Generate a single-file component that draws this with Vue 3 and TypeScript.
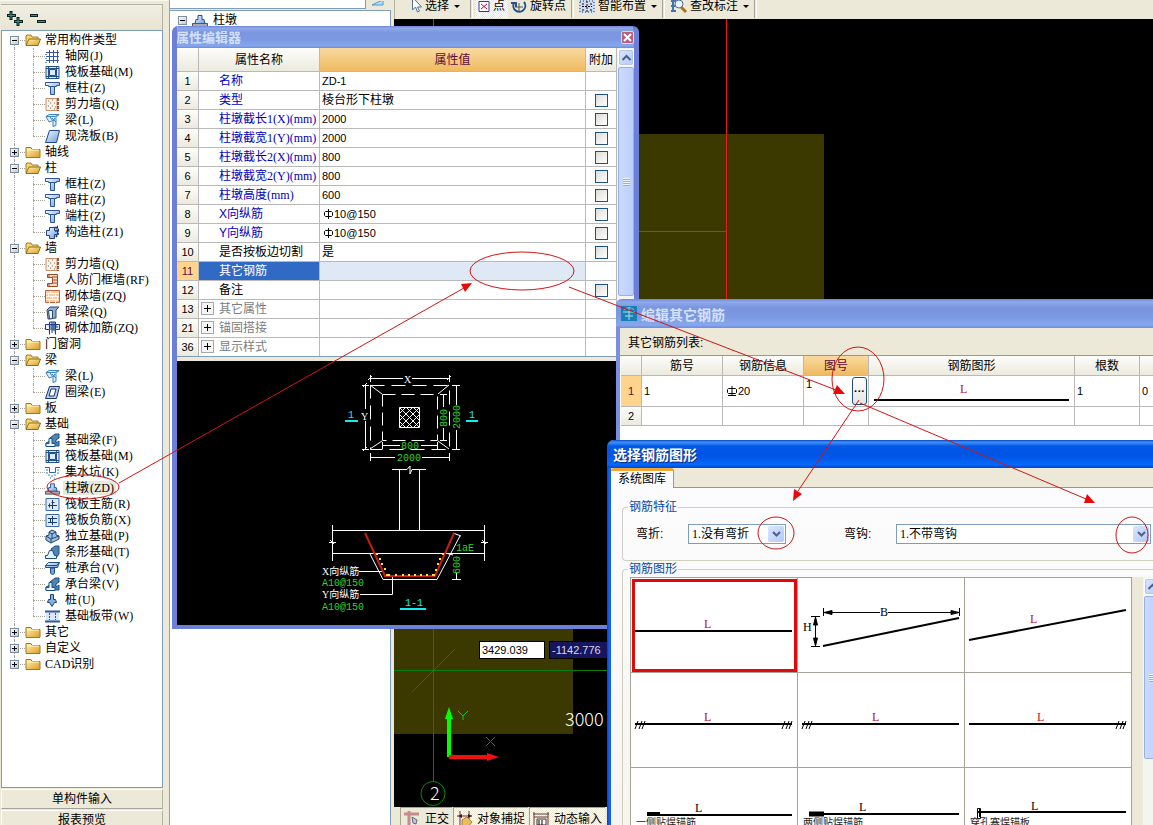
<script setup lang="ts">
import { ref } from 'vue'

interface Leaf { icon: string; name: string; code: string; active?: boolean }
interface Group { name: string; open: boolean; latin?: string; items: Leaf[] }
interface Prop { no: number; name: string; unit?: string; value?: string; zh?: string; rebar?: string; kind: 'key' | 'plain' | 'group' | 'current'; check: boolean }

const leaf = (icon: string, name: string, code: string, active = false): Leaf => ({ icon, name, code, active })

const groups = ref<Group[]>([
  { name: '常用构件类型', open: true, items: [leaf('grid', '轴网', '(J)'), leaf('raft', '筏板基础', '(M)'), leaf('column', '框柱', '(Z)'), leaf('shear', '剪力墙', '(Q)'), leaf('beam', '梁', '(L)'), leaf('slab', '现浇板', '(B)')] },
  { name: '轴线', open: false, items: [] },
  { name: '柱', open: true, items: [leaf('column', '框柱', '(Z)'), leaf('column', '暗柱', '(Z)'), leaf('column', '端柱', '(Z)'), leaf('tie', '构造柱', '(Z1)')] },
  { name: '墙', open: true, items: [leaf('shear', '剪力墙', '(Q)'), leaf('frame', '人防门框墙', '(RF)'), leaf('brick', '砌体墙', '(ZQ)'), leaf('hidden', '暗梁', '(Q)'), leaf('mesh', '砌体加筋', '(ZQ)')] },
  { name: '门窗洞', open: false, items: [] },
  { name: '梁', open: true, items: [leaf('beam', '梁', '(L)'), leaf('ring', '圈梁', '(E)')] },
  { name: '板', open: false, items: [] },
  { name: '基础', open: true, items: [leaf('fbeam', '基础梁', '(F)'), leaf('raft', '筏板基础', '(M)'), leaf('pit', '集水坑', '(K)'), leaf('pier', '柱墩', '(ZD)', true), leaf('mainbar', '筏板主筋', '(R)'), leaf('negbar', '筏板负筋', '(X)'), leaf('indep', '独立基础', '(P)'), leaf('strip', '条形基础', '(T)'), leaf('cap', '桩承台', '(V)'), leaf('fbeam', '承台梁', '(V)'), leaf('pile', '桩', '(U)'), leaf('band', '基础板带', '(W)')] },
  { name: '其它', open: false, items: [] },
  { name: '自定义', open: false, items: [] },
  { name: '识别', latin: 'CAD', open: false, items: [] },
])

const props: Prop[] = [
  { no: 1, name: '名称', value: 'ZD-1', kind: 'key', check: false },
  { no: 2, name: '类型', zh: '棱台形下柱墩', kind: 'key', check: true },
  { no: 3, name: '柱墩截长', unit: '1(X)(mm)', value: '2000', kind: 'key', check: true },
  { no: 4, name: '柱墩截宽', unit: '1(Y)(mm)', value: '2000', kind: 'key', check: true },
  { no: 5, name: '柱墩截长', unit: '2(X)(mm)', value: '800', kind: 'key', check: true },
  { no: 6, name: '柱墩截宽', unit: '2(Y)(mm)', value: '800', kind: 'key', check: true },
  { no: 7, name: '柱墩高度', unit: '(mm)', value: '600', kind: 'key', check: true },
  { no: 8, name: 'X向纵筋', rebar: '10@150', kind: 'key', check: true },
  { no: 9, name: 'Y向纵筋', rebar: '10@150', kind: 'key', check: true },
  { no: 10, name: '是否按板边切割', zh: '是', kind: 'plain', check: true },
  { no: 11, name: '其它钢筋', kind: 'current', check: false },
  { no: 12, name: '备注', kind: 'plain', check: true },
  { no: 13, name: '其它属性', kind: 'group', check: false },
  { no: 21, name: '锚固搭接', kind: 'group', check: false },
  { no: 36, name: '显示样式', kind: 'group', check: false },
]

const xCoord = ref('3429.039')
const yCoord = ref('-1142.776')
const shape = ref(0)
const bottomDots = [388, 395, 402, 408, 414, 420, 426, 432]
const sideDots = [[376, 553], [379, 558], [381, 563], [384, 568], [386, 574], [442, 553], [439, 558], [437, 563], [435, 569], [433, 574]]
</script>

<template>
  <div class="desktop">
    <svg class="defs" aria-hidden="true">
      <defs>
        <linearGradient id="gBlue" x1="0" y1="0" x2="1" y2="1"><stop offset="0" stop-color="#f4f9ff" /><stop offset="1" stop-color="#6f9ddd" /></linearGradient>
        <linearGradient id="gFold" x1="0" y1="0" x2="1" y2="1"><stop offset="0" stop-color="#fff3b8" /><stop offset="1" stop-color="#dd9c20" /></linearGradient>
        <pattern id="hatch" width="7" height="7" patternUnits="userSpaceOnUse" x="399" y="407"><path d="M0 0L7 7M7 0L0 7" stroke="#fff" fill="none" /></pattern>
      </defs>
      <symbol id="open" viewBox="0 0 16 14"><path d="M1 12V3l1-1h4l1 2h6v3" fill="#f4d570" stroke="#a58030" /><path d="M1 12.500L4 6h11.500L13 12.500Z" fill="url(#gFold)" stroke="#8f6b18" /></symbol>
      <symbol id="closed" viewBox="0 0 16 14"><path d="M1 12.500V2.500h5l1 2h8v8Z" fill="url(#gFold)" stroke="#a07820" /><path d="M2 5h12" stroke="#fff5c0" /></symbol>
      <symbol id="grid" viewBox="0 0 15 15"><path d="M4.500 1v13M8.500 1v13M12.500 1v13M1 3.500h13M1 7.500h13M1 11.500h13" stroke="#3a56a8" fill="none" /><path d="M0 5.500h2M0 9.500h2M0 13.500h2" stroke="#7a90c8" /></symbol>
      <symbol id="raft" viewBox="0 0 15 15"><path d="M1 1.500h13v12H1Z" fill="#dcebfa" stroke="#24508c" /><path d="M4.500 4.500h6v6h-6ZM3.500 1v13M11.500 1v13M1 3.500h13M1 11.500h13" fill="none" stroke="#24508c" /></symbol>
      <symbol id="column" viewBox="0 0 15 15"><path d="M.5 1.500h14v3h-3v1h-8v-1h-3ZM5.500 5.500h4v8h-4Z" fill="url(#gBlue)" stroke="#2c559b" /></symbol>
      <symbol id="shear" viewBox="0 0 15 15"><path d="M1 1.500h11v12H1Z" fill="#f8f1eb" stroke="#c98f6c" /><path d="M13 1v13" stroke="#a8582c" stroke-dasharray="3 1" stroke-width="2" /><path d="M3 4h1M7 3h1M5 6h1M9 6h1M3 9h1M7 9h1M10 10h1M5 11h1M9 12h1" stroke="#775" /></symbol>
      <symbol id="beam" viewBox="0 0 15 15"><path d="M1 3.500L4 1.500h10l-3 3v8l-3 1V8l2-3-3 3-3 1Z" fill="#d3ecff" stroke="#3d86c0" /><path d="M1 3.500h9l4-2M7 5l4 4M5 4l3 4" stroke="#3d86c0" fill="none" /></symbol>
      <symbol id="slab" viewBox="0 0 15 15"><path d="M4.500 1.500h10l-3 12H.5Z" fill="url(#gBlue)" stroke="#204a90" /></symbol>
      <symbol id="tie" viewBox="0 0 15 15"><path d="M4.500 2.500h5v3h3v4h-3v4h-5v-3h-3v-5h3Z" fill="url(#gBlue)" stroke="#223f80" /><path d="M9 3l3-1v3M10 6l3-1v5l-3 2" stroke="#223f80" fill="none" stroke-width="2" stroke-dasharray="2 1" /></symbol>
      <symbol id="frame" viewBox="0 0 15 15"><path d="M2.500 1.500h10v12h-10v-3h5v-6h-5Z" fill="#f6dccb" stroke="#a34a20" /><path d="M7 4h5M7 7h5M7 10h5M4 1v3M4 11v2" stroke="#a34a20" /></symbol>
      <symbol id="brick" viewBox="0 0 15 15"><path d="M.5 1.500h14v12H.5Z" fill="#f8c9a5" stroke="#bc653a" /><path d="M1 4.500h13M1 7.500h13M1 10.500h13M5.500 2v3M10.500 5v3M3.500 5v3M7.500 8v3M12.500 8v3M4.500 11v3M10.500 11v3" stroke="#fff8ef" /></symbol>
      <symbol id="hidden" viewBox="0 0 15 15"><path d="M2 5l3-3h9l-3 3v8l-8 1Z" fill="#91aed3" stroke="#31476d" /><path d="M3.500 5.500h4v8l-3 .5Z" fill="#eef5ff" stroke="#31476d" /></symbol>
      <symbol id="mesh" viewBox="0 0 15 15"><path d="M.5 3.500h14v5h-4v5M.5 3.500v5h4v5M4.500 1v7h6V1Z" fill="#d9e8ff" stroke="#1d3d8e" /><path d="M4 4h8M4 6h9M7 1v11M9 1v9" stroke="#1d3d8e" /></symbol>
      <symbol id="ring" viewBox="0 0 15 15"><path d="M4.500 1.500h10l-3 12H.5Z" fill="#b9cdec" stroke="#18346e" /><path d="M6 4h5l-2 7H4Z" fill="#fff" stroke="#18346e" /></symbol>
      <symbol id="fbeam" viewBox="0 0 15 15"><path d="M5 5l5-4h4v4l-3 2v3l3-2v5H1v-3l4-2Z" fill="#4f83b9" stroke="#1d4f83" /><path d="M1 13.500v-3h3v-5h3v5h3v3Z" fill="#e5f2ff" stroke="#1d4f83" /></symbol>
      <symbol id="pit" viewBox="0 0 15 15"><path d="M0 2.500h4.500v5h6v-5H15" fill="none" stroke="#2b65ac" /><path d="M1 5h2M1 8h2M3 10h2M6 11h2M9 10h2M12 8h2M12 5h2M5 13h1M9 13h1" stroke="#3380cb" /></symbol>
      <symbol id="pier" viewBox="0 0 16 15"><path d="M6 2.500h4v4h2l1 4H3l1-4h2Z" fill="url(#gBlue)" stroke="#1d4fa5" /><path d="M.5 10.500h15v3H.5Z" fill="#aaa" stroke="#555" /></symbol>
      <symbol id="mainbar" viewBox="0 0 15 15"><path d="M1 1.500h13v12H1Z" fill="#dcebff" stroke="#3f69ab" /><path d="M7.500 3v9M3 8.500h9M9.500 5.500h-3M4.500 6.500v4" stroke="#183a78" fill="none" /></symbol>
      <symbol id="negbar" viewBox="0 0 15 15"><path d="M1 1.500h13v12H1Z" fill="#dcebff" stroke="#3f69ab" /><path d="M7.500 3v9M3 5.500h9M3 9.500h9M5.500 5v5" stroke="#183a78" fill="none" /></symbol>
      <symbol id="indep" viewBox="0 0 15 15"><path d="M1 7l3-1V3l3-2 4 2v3l3 1v3l-8 4-5-3Z" fill="#9fc0e6" stroke="#1b4473" /><path d="M1 7l5 3 8-3M6 10v4M4 3l3 2 4-2M7 5v4" fill="none" stroke="#1b4473" /></symbol>
      <symbol id="strip" viewBox="0 0 15 15"><path d="M6 4l4-3h4v8l-3 4Z" fill="#4f83b9" stroke="#1d4f83" /><path d="M.5 13.500v-3h2l2-5h3l2 5h2v3Z" fill="#e5f2ff" stroke="#1d4f83" /></symbol>
      <symbol id="cap" viewBox="0 0 15 15"><path d="M.5 4.500l3-3h11l-2 5H.5Z" fill="url(#gBlue)" stroke="#1d4f83" /><path d="M1 4.500h11l2-3" fill="none" stroke="#1d4f83" /><path d="M5.500 7h4v5l-2 2-2-2Z" fill="#6fa3da" stroke="#1d4f83" /></symbol>
      <symbol id="pile" viewBox="0 0 15 15"><path d="M5.500 1.500h3v5h2l1 3h-2l-2.500 4-2.500-4h-2l1-3h2Z" fill="#86b0e4" stroke="#1b4473" /></symbol>
      <symbol id="band" viewBox="0 0 15 15"><path d="M1 2h13v11H1Z" fill="#d9e6fb" /><path d="M0 2.500h15M0 12.500h15" stroke="#2d5b9e" stroke-width="2" /><path d="M4.500 4v7M10.500 4v7" stroke="#2d5b9e" stroke-dasharray="2 1" /></symbol>
    </svg>

    <main class="workspace">
      <aside class="left">
        <div class="tree-tools">
          <button class="flat" aria-label="展开">
            <svg width="17" height="16" viewBox="0 0 17 16"><path d="M5 1v9M1 5.500h9M12 7v9M8 11.500h9" stroke="#0b2020" stroke-width="3" /><path d="M5 2v7M2 5.500h7M12 8v7M9 11.500h7" stroke="#2b9a84" /></svg>
          </button>
          <button class="flat" aria-label="折叠">
            <svg width="17" height="16" viewBox="0 0 17 16"><path d="M1 5.500h8M8 11.500h9" stroke="#0b2020" stroke-width="3" /><path d="M2 5.500h6M9 11.500h7" stroke="#2b9a84" /></svg>
          </button>
        </div>
        <div class="tree">
          <template v-for="(g, gi) in groups" :key="gi">
            <div class="row" :class="{ first: gi === 0, last: gi === groups.length - 1 }">
              <span class="rail"><button class="toggle" :aria-label="g.name" @click="g.open = !g.open"><svg width="9" height="9" viewBox="0 0 9 9"><path d="M2 4.500h5" stroke="#000" /><path v-if="!g.open" d="M4.500 2v5" stroke="#000" /></svg></button></span>
              <svg class="folder" width="16" height="14"><use :href="g.open ? '#open' : '#closed'" /></svg>
              <span class="gname"><span class="latin">{{ g.latin }}</span>{{ g.name }}</span>
            </div>
            <template v-if="g.open">
              <div v-for="(it, i) in g.items" :key="i" class="row">
                <span class="rail"></span>
                <span class="branch" :class="{ end: i === g.items.length - 1 }"></span>
                <svg width="15" height="15"><use :href="'#' + it.icon" /></svg>
                <a href="#" class="leaf" :class="{ active: it.active }">{{ it.name }}<span class="latin code">{{ it.code }}</span></a>
              </div>
            </template>
          </template>
        </div>
        <button class="wide">单构件输入</button>
        <button class="wide">报表预览</button>
      </aside>

      <section class="list">
        <div class="search">
          <input type="text" aria-label="搜索" />
          <button class="flat find" aria-label="查找"><svg width="16" height="8" viewBox="0 0 16 8"><path d="M2 4l4-2 7-3v5H8Z" fill="#b9def8" stroke="#4d9ad5" /></svg></button>
        </div>
        <div class="list-box">
          <div class="list-row">
            <button class="toggle" aria-label="收起"><svg width="9" height="9" viewBox="0 0 9 9"><path d="M2 4.500h5" stroke="#000" /></svg></button>
            <svg width="16" height="15"><use href="#pier" /></svg>
            <span>柱墩</span>
          </div>
        </div>
      </section>

      <section class="stage">
        <div class="toolbar">
          <button class="tool pick"><svg width="13" height="14" viewBox="0 0 13 14"><path d="M3.500-3v13l3-3 2 5 2-1-2-4h4Z" fill="#fff" stroke="#536f99" /></svg><span>选择</span><i class="tri"></i></button>
          <i class="sep"></i>
          <button class="tool pressed"><svg width="12" height="13" viewBox="0 0 12 13"><path d="M1 1.500h10v10H1Z" fill="#fff" stroke="#28418a" /><path d="M3 4l6 5M9 4L3 9" stroke="#c04" /></svg><span>点</span></button>
          <button class="tool"><svg width="16" height="14" viewBox="0 0 16 14"><path d="M13 2a6 6 0 1 1-10 1M0 3h5v4" fill="none" stroke="#26518d" stroke-width="2" /><path d="M8 3v8M4 7h8" stroke="#555" /></svg><span>旋转点</span></button>
          <i class="sep"></i>
          <button class="tool"><svg width="16" height="14" viewBox="0 0 16 14"><path d="M0 0h16v13H0Z" fill="#cfdcf0" /><path d="M1 1h14v11H1Z" fill="none" stroke="#223a70" stroke-dasharray="1 2" /><path d="M8 1v11M3 6.500h10M4 3v2M12 3v2M4 9v2M12 9v2" stroke="#111" stroke-dasharray="2 1" /></svg><span>智能布置</span><i class="tri"></i></button>
          <i class="sep"></i>
          <button class="tool"><svg width="17" height="14" viewBox="0 0 17 14"><path d="M3 0v12M1 1h5M1 6h4M1 11h5" stroke="#4173b9" stroke-width="2" /><circle cx="9" cy="4" r="4" fill="#e8f5ff" stroke="#4d6e9b" /><path d="M11 7l5 5" stroke="#a87422" stroke-width="3" /></svg><span>查改标注</span><i class="tri"></i></button>
          <i class="sep"></i>
        </div>
        <div class="canvas">
          <svg width="759" height="788" viewBox="394 19 759 788">
            <path d="M500 134H824V500H500ZM394 600H573V734H394Z" fill="#3c3900" />
            <path d="M726.500 19V500M433.500 19V30M600 231.500H726" stroke="#f01818" fill="none" />
            <path d="M394 670.500H620M433.500 600V781M412 692L455 649" stroke="#0b7d0b" fill="none" />
            <circle cx="433" cy="793.500" r="12" fill="none" stroke="#0b8a0b" />
            <text x="430" y="800" class="cad" fill="#fff">2</text>
            <text x="565" y="726" class="cad" fill="#fff">3000</text>
            <path d="M449 757V716" stroke="#0f0" stroke-width="4" /><path d="M449 707L453 719H445Z" fill="#0f0" />
            <path d="M449 757H487" stroke="#f01010" stroke-width="4" /><path d="M499 757L487 761V753Z" fill="#f01010" />
            <path d="M458 711L463 716L468 711M463 716V720" stroke="#13c813" fill="none" />
            <path d="M486 737L495 746M495 737L486 746" stroke="#f01818" fill="none" />
          </svg>
          <div class="coords"><input v-model="xCoord" aria-label="X 坐标" /><input v-model="yCoord" class="dark" aria-label="Y 坐标" /></div>
        </div>
        <div class="status">
          <button class="tool"><svg width="17" height="15" viewBox="0 0 17 15"><path d="M0 3h15M5 0v14" stroke="#c78c88" stroke-width="3" /><path d="M8 6l5 3-1 4-3-1Z" fill="#b9c7df" stroke="#668" /></svg><span>正交</span></button>
          <button class="tool pressed"><svg width="16" height="15" viewBox="0 0 16 15"><path d="M3 0v14M12 0v12M0 5h15" stroke="#6b3430" /><path d="M1 5l4-2v4ZM15 5l-4-2v4Z" fill="#511" /><path d="M5 9l5-3 5 5-4 5H5Z" fill="#e6bd64" stroke="#a98238" /></svg><span>对象捕捉</span></button>
          <button class="tool pressed"><svg width="17" height="15" viewBox="0 0 17 15"><path d="M1 1v13M15 1v13M0 3h16M1 6h14" stroke="#6b3430" fill="none" /><path d="M4 8h9v6H4Z" fill="#fff" stroke="#333" /><path d="M6 9v5M9 9v5" stroke="#000" /></svg><span>动态输入</span></button>
        </div>
      </section>
    </main>

    <section class="win props">
      <header class="title idle"><h2>属性编辑器</h2><button class="close" aria-label="关闭"><svg width="9" height="9" viewBox="0 0 9 9"><path d="M1 1l7 7M8 1L1 8" stroke="#fff" stroke-width="2" /></svg></button></header>
      <div class="sheet">
        <table class="ptable">
          <thead><tr><th class="c-no"></th><th class="c-name">属性名称</th><th class="hot">属性值</th><th class="c-add">附加</th></tr></thead>
          <tbody>
            <tr v-for="p in props" :key="p.no" :class="p.kind">
              <th class="num">{{ p.no }}</th>
              <td class="pname"><button v-if="p.kind === 'group'" class="plus" :aria-label="p.name"><svg width="13" height="13" viewBox="0 0 13 13"><path d="M3 6.500h7M6.500 3v7" stroke="#000" /></svg></button><span>{{ p.name }}</span><span class="latin">{{ p.unit }}</span></td>
              <td class="pval"><svg v-if="p.rebar" class="phi" width="9" height="12" viewBox="0 0 9 12"><path d="M4.500 1v10M.5 4.500l1-1h6l1 1v3l-1 1h-6l-1-1Z" stroke="#000" fill="none" /></svg><span class="digits">{{ p.value }}{{ p.rebar }}</span>{{ p.zh }}</td>
              <td class="pcheck"><input v-if="p.check" type="checkbox" :aria-label="p.name" /></td>
            </tr>
          </tbody>
        </table>
        <div class="scroll"><button class="sbtn" aria-label="向上"><svg width="11" height="9" viewBox="0 0 11 9"><path d="M1.500 7l4-4 4 4" fill="none" stroke="#4d6185" stroke-width="2" /></svg></button><div class="thumb"><i class="grip"></i></div></div>
      </div>
      <div class="view">
        <svg width="457" height="264" viewBox="177 361 457 264">
          <g stroke="#fff" fill="none">
            <path d="M370 378.500H403M412 378.500H450M370.500 375V382M449.500 375V382M368 380l4-4M447 380l4-4" />
            <path d="M370.500 385.500H449.500V449.500H370.500Z" stroke-dasharray="14 7" />
            <path d="M382.500 394.500H437.500V440.500H382.500Z" stroke-dasharray="13 6" />
            <path d="M370 385L382 394M449 385L438 394M370 449L382 441M449 449L438 441" />
            <path d="M399.500 407.500H419.500V427.500H399.500Z" fill="url(#hatch)" />
            <path d="M365.500 385V409M365.500 421V450M362 385.500H369M362 449.500H369M363 387l4-4M363 451l4-4" />
            <path d="M443.500 394V407M443.500 428V441M440 394.500H447M440 440.500H447M456.500 385V405M456.500 430V450M452 385.500H460M452 449.500H460" />
            <path d="M382 445.500H400M421 445.500H438M382.500 442V449M437.500 442V449M370 457.500H395M422 457.500H450M370.500 453V461M449.500 453V461" />
            <path d="M392 469.500H407L410 466V474L412 469.500H426M399.500 469V531M419.500 469V531" />
            <path d="M332 530.500H485M332 553.500H485M332.500 525V561M484.500 525V561M329 542.500h7M481 542.500h7M330 540l4 4M482 540l4 4" />
            <path d="M370 554L383 579.500H437L460 536M453 533l8 3M445 553l8 2" />
            <path d="M456.500 573V580M452 553.500H461M452 579.500H461M359 571.500H382M360 594.500H392.500V575" />
          </g>
          <path d="M365 533L385 576H435L454 533" stroke="#c91d12" stroke-width="2" fill="none" />
          <g fill="#ffe04a"><rect v-for="x in bottomDots" :key="x" :x="x" y="574" width="2" height="2" /><rect v-for="(d, i) in sideDots" :key="i" :x="d[0]" :y="d[1]" width="2" height="2" /></g>
          <path d="M345 421H358M466 421H478M400 609H426" stroke="#1ee" stroke-width="2" />
          <g class="cyan"><text x="348" y="418">1</text><text x="469" y="418">1</text><text x="405" y="606">1-1</text></g>
          <g class="white"><text x="404" y="383">X</text><text x="361" y="420">Y</text><text x="322" y="575">X向纵筋</text><text x="322" y="598">Y向纵筋</text></g>
          <g class="green"><text x="401" y="449">800</text><text x="397" y="461">2000</text><text x="322" y="586">A10@150</text><text x="322" y="610">A10@150</text><text x="456" y="551">1aE</text><text transform="translate(447 427) rotate(-90)">800</text><text transform="translate(460 429) rotate(-90)">2000</text><text transform="translate(460 574) rotate(-90)">600</text></g>
        </svg>
      </div>
    </section>

    <section class="win rebar">
      <header class="title idle tall"><svg width="16" height="15" viewBox="0 0 16 15"><rect width="16" height="15" fill="#1b7eb4" /><path d="M8 1v13M2 6h12M4 10h8" stroke="#a9dff3" fill="none" /><path d="M3 4c2-3 8-3 10 0" stroke="#6ec0df" fill="none" /></svg><h2>编辑其它钢筋</h2></header>
      <p class="caption">其它钢筋列表:</p>
      <table class="rtable">
        <colgroup><col class="w21" /><col class="w81" /><col class="w81" /><col class="w65" /><col class="w206" /><col class="w65" /><col class="w81" /></colgroup>
        <thead><tr><th></th><th>筋号</th><th>钢筋信息</th><th class="hot">图号</th><th>钢筋图形</th><th>根数</th><th></th></tr></thead>
        <tbody>
          <tr class="r1">
            <th class="cur">1</th><td>1</td>
            <td class="info"><svg class="phi" width="10" height="12" viewBox="0 0 10 12"><path d="M5 1v10M.5 4.500l1-1h7l1 1v3l-1 1h-7l-1-1ZM1 10.500h8" stroke="#000" fill="none" /></svg>20</td>
            <td><div class="pick-cell"><span>1</span><button class="more" aria-label="选择图号">···</button></div></td>
            <td class="draw"><svg width="205" height="30" viewBox="869 376 205 30"><path d="M874 400H1069" stroke="#000" stroke-width="2" /><text x="960" y="393" class="mono red">L</text></svg></td>
            <td>1</td><td>0</td>
          </tr>
          <tr class="r2"><th>2</th><td></td><td></td><td></td><td></td><td></td><td></td></tr>
        </tbody>
      </table>
    </section>

    <section class="win shapes">
      <header class="title live"><h2>选择钢筋图形</h2></header>
      <div class="tabs"><button class="tab">系统图库</button></div>
      <div class="page">
        <fieldset class="feature">
          <legend>钢筋特征</legend>
          <div class="fields">
            <label for="bend">弯折:</label>
            <div class="combo short"><select id="bend"><option>1.没有弯折</option></select><i><svg width="9" height="8" viewBox="0 0 9 8"><path d="M1 2l3.500 3.500L8 2" fill="none" stroke="#4d6185" stroke-width="2" /></svg></i></div>
            <label for="hook">弯钩:</label>
            <div class="combo long"><select id="hook"><option>1.不带弯钩</option></select><i><svg width="9" height="8" viewBox="0 0 9 8"><path d="M1 2l3.500 3.500L8 2" fill="none" stroke="#4d6185" stroke-width="2" /></svg></i></div>
          </div>
        </fieldset>
        <fieldset class="gallery">
          <legend>钢筋图形</legend>
          <div class="gal-body">
            <div class="cells">
              <button v-for="n in 9" :key="n" class="cell" :class="{ chosen: shape === n - 1 }" :aria-label="'图形 ' + n" @click="shape = n - 1">
                <svg width="166" height="94" viewBox="0 0 166 94" stroke="#000" stroke-width="2" fill="none">
                  <template v-if="n === 1"><path d="M4 53H161" /><text x="73" y="50" class="mono red">L</text></template>
                  <template v-else-if="n === 2"><path d="M25 68L161 40" /><path d="M25.500 30v8M161.500 30v8M26 34.500H82M90 34.500H161M17.500 39V68M13 38.500h9M13 68.500h9" stroke-width="1" /><path d="M26 34.500l8-2v4ZM161 34.500l-8-2v4ZM17.500 39l-2 8h4ZM17.500 68l-2-8h4Z" fill="#000" stroke-width="1" /><text x="82" y="38" class="mono">B</text><text x="5" y="53" class="mono">H</text></template>
                  <template v-else-if="n === 3"><path d="M4 62L161 32" /><text x="65" y="45" class="mono red">L</text></template>
                  <template v-else-if="n < 7"><path d="M4 51H161" /><path v-if="n < 6" d="M4 56l3-8M8 56l3-8M11 56l3-8" stroke-width="1" /><path v-if="n !== 5" d="M151 56l3-8M155 56l3-8M158 56l3-8" stroke-width="1" /><text :x="n === 6 ? 72 : n === 5 ? 74 : 73" y="48" class="mono red">L</text></template>
                  <template v-else-if="n === 7"><path d="M16 47H161" /><path d="M16 46H29" stroke-width="4" /><text x="64" y="44" class="mono">L</text><text x="5" y="58" class="tiny">一侧贴焊锚筋</text></template>
                  <template v-else-if="n === 8"><path d="M11 46H161" /><path d="M11 46H26" stroke-width="5" /><text x="61" y="43" class="mono">L</text><text x="5" y="58" class="tiny">两侧贴焊锚筋</text></template>
                  <template v-else><path d="M13 44H161" /><path d="M12.500 40.500h3v10h-3Z" stroke-width="1" /><path d="M15 41v8" /><text x="66" y="42" class="mono">L</text><text x="5" y="58" class="tiny">穿孔塞焊锚板</text></template>
                </svg>
              </button>
            </div>
            <div class="scroll gal-scroll"><button class="sbtn" aria-label="向上"><svg width="11" height="9" viewBox="0 0 11 9"><path d="M1.500 7l4-4 4 4" fill="none" stroke="#4d6185" stroke-width="2" /></svg></button><div class="thumb gthumb"><i class="grip"></i></div></div>
          </div>
        </fieldset>
      </div>
    </section>

    <svg class="notes" width="1153" height="825" viewBox="0 0 1153 825" aria-hidden="true">
      <g fill="none" stroke="#d21414">
        <ellipse cx="83" cy="487" rx="36" ry="12" /><ellipse cx="522" cy="271" rx="52" ry="19" /><ellipse cx="858" cy="379" rx="26" ry="32" /><ellipse cx="776" cy="533" rx="18" ry="16" /><ellipse cx="1132" cy="535" rx="16" ry="18" />
        <path d="M119 483L464 288M569 287L836 390M859 400L798 491M860 403L1086 499" />
      </g>
      <path d="M472 283L465 292L461 284ZM845 394L833 394L837 385ZM793 501L794 489L802 494ZM1095 503L1084 503L1087 494Z" fill="#e80a0a" />
    </svg>
  </div>
</template>

<style>
html, body { margin: 0; overflow: hidden; }
</style>

<style scoped>
.desktop { position: relative; height: 100vh; overflow: hidden; background: #ece9d8; color: #000; font: 12px/14px "Liberation Sans", "Noto Sans CJK SC", sans-serif; }
.desktop * { box-sizing: border-box; }
.defs { position: absolute; width: 0; height: 0; }
svg { display: block; flex: none; }
button, input, select { font: inherit; color: inherit; margin: 0; padding: 0; border-radius: 0; }
button { border: 0; background: none; }
h2, p { margin: 0; }
.latin { font-family: "Liberation Serif", serif; }
.workspace { display: grid; grid-template-columns: 169px 225px 1fr; height: 100%; }

.left { display: flex; flex-direction: column; min-height: 0; padding: 3px 6px 0 1px; border-top: 1px solid #f8f7f0; }
.tree-tools { display: flex; gap: 6px; height: 26px; flex: none; padding: 5px; border-top: 1px solid #b5b19f; border-right: 1px solid #b5b19f; background: linear-gradient(#f1efe3, #e8e4d3); }
.tree { flex: 1; min-height: 0; overflow: hidden; padding-top: 1px; border: 1px solid #7f9db9; background: #fff; }
.row { display: flex; align-items: center; height: 16px; white-space: nowrap; }
.rail { position: relative; display: flex; align-items: center; justify-content: flex-end; width: 23px; height: 16px; padding-right: 6px; flex: none; }
.rail::before { content: ""; position: absolute; left: 12px; top: 0; bottom: 0; border-left: 1px dotted #a5a293; }
.first .rail::before { top: 8px; }
.last .rail::before { bottom: 8px; }
.rail:has(.toggle)::after { content: ""; position: absolute; left: 18px; right: 0; top: 8px; border-top: 1px dotted #a5a293; }
.toggle { position: relative; display: block; width: 9px; height: 9px; border: 1px solid #7b8fa5; background: linear-gradient(135deg, #fff, #cdc9bb); flex: none; }
.toggle svg { margin: -1px; }
.gname { padding-left: 4px; }
.branch { position: relative; width: 20px; height: 16px; flex: none; }
.branch::before { content: ""; position: absolute; left: 8px; top: 0; bottom: 0; border-left: 1px dotted #a5a293; }
.branch.end::before { bottom: 8px; }
.branch::after { content: ""; position: absolute; left: 8px; right: 0; top: 8px; border-top: 1px dotted #a5a293; }
.leaf { margin-left: 3px; padding: 0 2px; color: #000; text-decoration: none; }
.leaf.active { background: #ece9d8; }
.code { margin-left: 1px; }
.wide { height: 20px; flex: none; margin-top: 1px; border: 1px solid; border-color: #fff #b5b19f #a5a293 #fff; background: #ece9d8; text-align: center; }
.left .wide:last-child { margin-bottom: -5px; }

.list { display: flex; flex-direction: column; border-left: 1px solid #8ba2b8; padding-right: 3px; min-width: 0; }
.search { display: flex; height: 9px; flex: none; overflow: hidden; }
.search input { flex: 1; min-width: 0; height: 9px; border: 1px solid #7f9db9; border-top: 0; border-left: 0; background: #fff; }
.find { width: 25px; padding-left: 4px; }
.list-box { flex: 1; border: 1px solid #7f9db9; border-left: 0; border-bottom: 0; background: #fff; margin-top: 1px; }
.list-row { display: flex; align-items: center; gap: 5px; height: 18px; padding-left: 8px; }

.stage { display: flex; flex-direction: column; min-width: 0; }
.toolbar { display: flex; align-items: flex-start; height: 19px; overflow: hidden; flex: none; padding-left: 5px; border-left: 1px solid #b5b19f; background: #ece9d8; }
.tool { display: flex; align-items: flex-start; gap: 3px; height: 18px; padding: 0 3px; line-height: 13px; white-space: nowrap; flex: none; }
.toolbar .pick { padding: 0 8px 0 9px; }
.tool.pressed { background: repeating-conic-gradient(#fff 0 25%, #ece9d8 0 50%) 0 0 / 2px 2px; }
.tri { margin: 5px 0 0 2px; border: 3px solid transparent; border-top-color: #000; border-bottom: 0; }
.sep { width: 3px; height: 18px; margin: 0 2px; border-left: 1px solid #a5a293; border-right: 1px solid #fff; flex: none; }
.canvas { position: relative; flex: 1; min-height: 0; overflow: hidden; background: #000; }
.cad { font: 300 18px "Noto Sans CJK SC", "Liberation Sans", sans-serif; }
.coords { position: absolute; left: 85px; top: 622px; display: flex; gap: 4px; }
.coords input { width: 66px; height: 18px; padding: 0 2px; border: 1px solid #000; background: #fff; font: 11px/14px "Liberation Sans", sans-serif; }
.coords .dark { background: #17155c; color: #d8d8f0; }
.status { display: flex; height: 18px; flex: none; gap: 1px; padding: 0 0 0 6px; overflow: hidden; background: #ece9d8; }
.status .tool { height: 26px; padding: 3px 3px 0; gap: 4px; border-left: 1px solid #a5a293; border-top: 1px solid #a5a293; line-height: 16px; }

.win { position: absolute; display: flex; flex-direction: column; overflow: hidden; }
.title { display: flex; align-items: center; flex: none; }
.title h2 { flex: 1; font: bold 13px/22px "Noto Sans CJK SC", sans-serif; }
.idle { color: #d3e0fa; background: linear-gradient(#6e87dc, #8fa9ea 10%, #7a96df 30%, #7b98e2 60%, #86a8ec 90%, #6e8ade); }
.props { left: 172px; top: 26px; width: 467px; height: 603px; border: solid #6c7fd9; border-width: 0 5px 4px; border-radius: 6px 6px 0 0; }
.props .title { height: 22px; margin: 0 -5px; padding: 0 5px 0 4px; }
.close { display: grid; place-items: center; width: 13px; height: 13px; border: 1px solid #e5d5e8; background: #b3617b; border-radius: 2px; }
.sheet { display: flex; height: 309px; flex: none; background: #fff; border-bottom: 1px solid #7f9db9; overflow: hidden; box-shadow: 0 4px #ece9d8; }
table { border-collapse: separate; border-spacing: 0; table-layout: fixed; }
th, td { padding: 0; border: solid #b9b9b9; border-width: 0 1px 1px 0; font-weight: normal; white-space: nowrap; overflow: hidden; }
th { background: linear-gradient(#fdfdfa, #eceade); }
.hot { background: linear-gradient(#f9d9a0, #efba5f); color: #5d0b3d; }
.ptable { width: 440px; flex: none; }
.ptable thead th { height: 24px; }
.c-no { width: 22px; }
.c-name { width: 121px; }
.c-add { width: 31px; }
.ptable tbody th, .ptable td { height: 19px; line-height: 18px; }
.num, .digits, .rtable tbody { font: 11px/16px "Liberation Sans", sans-serif; }
.pname { position: relative; padding-left: 20px; }
.plus { position: absolute; left: 2px; top: 2px; border: 1px solid #a9a9a9; background: #f5f5f5; width: 13px; height: 13px; }
.plus svg { margin: -1px; }
.key .pname { color: #0000c0; }
.group .pname { color: #7c7c7c; }
.current .num { background: #ffd58d; color: #5d0b3d; }
.current .pname { background: #316ac5; color: #fff; }
.current .pval { background: #dfe8f5; }
.pval { padding-left: 2px; }
.phi { display: inline-block; vertical-align: -2px; margin: 0 1px 0 2px; }
.pcheck input { appearance: none; display: block; width: 13px; height: 13px; margin: 0 auto; border: 1px solid #1d5281; background: linear-gradient(135deg, #dcdcd7, #fff); }
.scroll { width: 17px; display: flex; flex-direction: column; gap: 1px; padding: 1px 0 0 1px; background: #f5f5f0; flex: none; }
.sbtn { display: grid; place-items: center; width: 16px; height: 17px; flex: none; border: 1px solid #fff; border-radius: 3px; background: linear-gradient(135deg, #dbe6ff, #b6cbfa); outline: 1px solid #b5c7ee; outline-offset: -2px; }
.thumb { display: grid; place-items: center; width: 16px; height: 229px; border: 1px solid #98b0e8; border-radius: 2px; background: linear-gradient(90deg, #cbdaff, #bccffc); }
.grip { width: 7px; height: 8px; background: repeating-linear-gradient(#eef4fe 0 1px, #8cb0f8 1px 2px); }
.view { flex: 1; min-height: 0; margin-top: 4px; background: #000; }
.cyan, .white, .green { font: 10px "Liberation Mono", "Noto Sans CJK SC", monospace; }
.white { font-family: "Liberation Serif", "Noto Sans CJK SC", serif; }
.cyan { fill: #1ee; }
.white { fill: #fff; }
.green { fill: #2bd52b; }

.rebar { left: 616px; right: 0; top: 299px; height: 150px; padding-left: 4px; border-radius: 6px 0 0 0; background: linear-gradient(90deg, #7a8fe0 4px, #fff 4px); }
.tall { height: 29px; margin-left: -4px; padding-left: 5px; gap: 4px; }
.title.tall h2, .title.live h2 { font-size: 14px; }
.caption { height: 28px; padding: 8px; flex: none; line-height: 14px; background: #ece9d8; border-bottom: 1px solid #7f9db9; }
.rtable { width: 600px; margin-left: 1px; }
.rtable thead th { height: 20px; line-height: 16px; }
.w21 { width: 21px; } .w81 { width: 81px; } .w65 { width: 65px; } .w206 { width: 206px; }
.r1 th, .r1 td { height: 31px; }
.r2 th, .r2 td { height: 19px; }
.rtable tbody td { padding-left: 2px; }
.rtable tbody .draw { padding: 0; }
.cur { background: #ffd58d; color: #5d0b3d; }
.pick-cell { display: flex; justify-content: space-between; height: 30px; padding-right: 1px; }
.more { width: 15px; height: 28px; margin-top: 1px; border: 1px solid #1d4f83; border-radius: 3px; background: linear-gradient(#fff, #e4e4df); font-weight: bold; line-height: 24px; }
.mono { font: 12px "Liberation Serif", serif; fill: #000; stroke: none; }
.mono.red { fill: #c1121c; }
.tiny { font: 10px "Noto Sans CJK SC", sans-serif; fill: #222; stroke: none; }

.shapes { left: 607px; right: 0; top: 440px; bottom: 0; padding-left: 4px; border-radius: 7px 0 0 0; background: linear-gradient(90deg, #0640c8, #1a6cf5 3px, #0855dd 4px, #ece9d8 4px); }
.live { height: 28px; margin-left: -4px; padding-left: 6px; color: #fff; background: linear-gradient(#0a46c0, #3d92fb 8%, #0557e6 22%, #0054e3 55%, #0468fb 88%, #0144d0); }
.live h2 { text-shadow: 1px 1px #0a2a80; }
.tabs { display: flex; height: 20px; flex: none; background: #ece9d8; box-shadow: inset 0 -1px #919b9c; }
.tab { width: 63px; border: 1px solid #919b9c; border-width: 0 1px 0 0; border-top: 3px solid #f0a534; border-radius: 3px 3px 0 0; background: #fcfcfe; line-height: 15px; }
.page { flex: 1; min-height: 0; display: flex; flex-direction: column; padding: 12px 0 0 11px; background: linear-gradient(#fcfcfe, #f6f5f0); }
fieldset { min-width: 0; margin: 0; padding: 0; border: 1px solid #d0d0bf; border-right: 0; border-radius: 4px 0 0 4px; flex: none; }
legend { margin-left: 5px; padding: 0 1px; color: #0a46a5; line-height: 14px; }
.feature { height: 61px; margin-bottom: 1px; }
.fields { display: flex; align-items: center; padding: 10px 0 0 13px; }
.feature label { width: 52px; }
.combo { display: flex; height: 20px; border: 1px solid #7f9db9; background: #fff; position: relative; }
.combo select { appearance: none; border: 0; background: none; width: 100%; padding-left: 3px; outline: none; font: 12px/16px "Liberation Serif", "Noto Sans CJK SC", serif; }
.combo i { position: absolute; right: 1px; top: 1px; width: 16px; height: 16px; display: grid; place-items: center; border-radius: 2px; background: linear-gradient(135deg, #dbe6ff, #b3c8f6); pointer-events: none; }
.short { width: 98px; margin-right: 58px; }
.long { flex: 1; margin-right: 2px; }
.gallery { height: 300px; }
.gal-body { display: flex; height: 290px; margin-left: 7px; margin-top: 1px; background: #ece9d8; }
.cells { display: grid; grid-template-columns: repeat(3, 167px); grid-auto-rows: 95px; width: 502px; border: solid #a5a295; border-width: 1px 0 0 1px; flex: none; }
.cell { position: relative; border: solid #a5a295; border-width: 0 1px 1px 0; background: #fff; }
.chosen::after { content: ""; position: absolute; inset: 1px 0 0 1px; border: 3px solid #e10a0a; }
.gal-scroll { margin-left: 11px; }
.gthumb { height: 163px; }
.notes { position: absolute; left: 0; top: 0; pointer-events: none; }
</style>
